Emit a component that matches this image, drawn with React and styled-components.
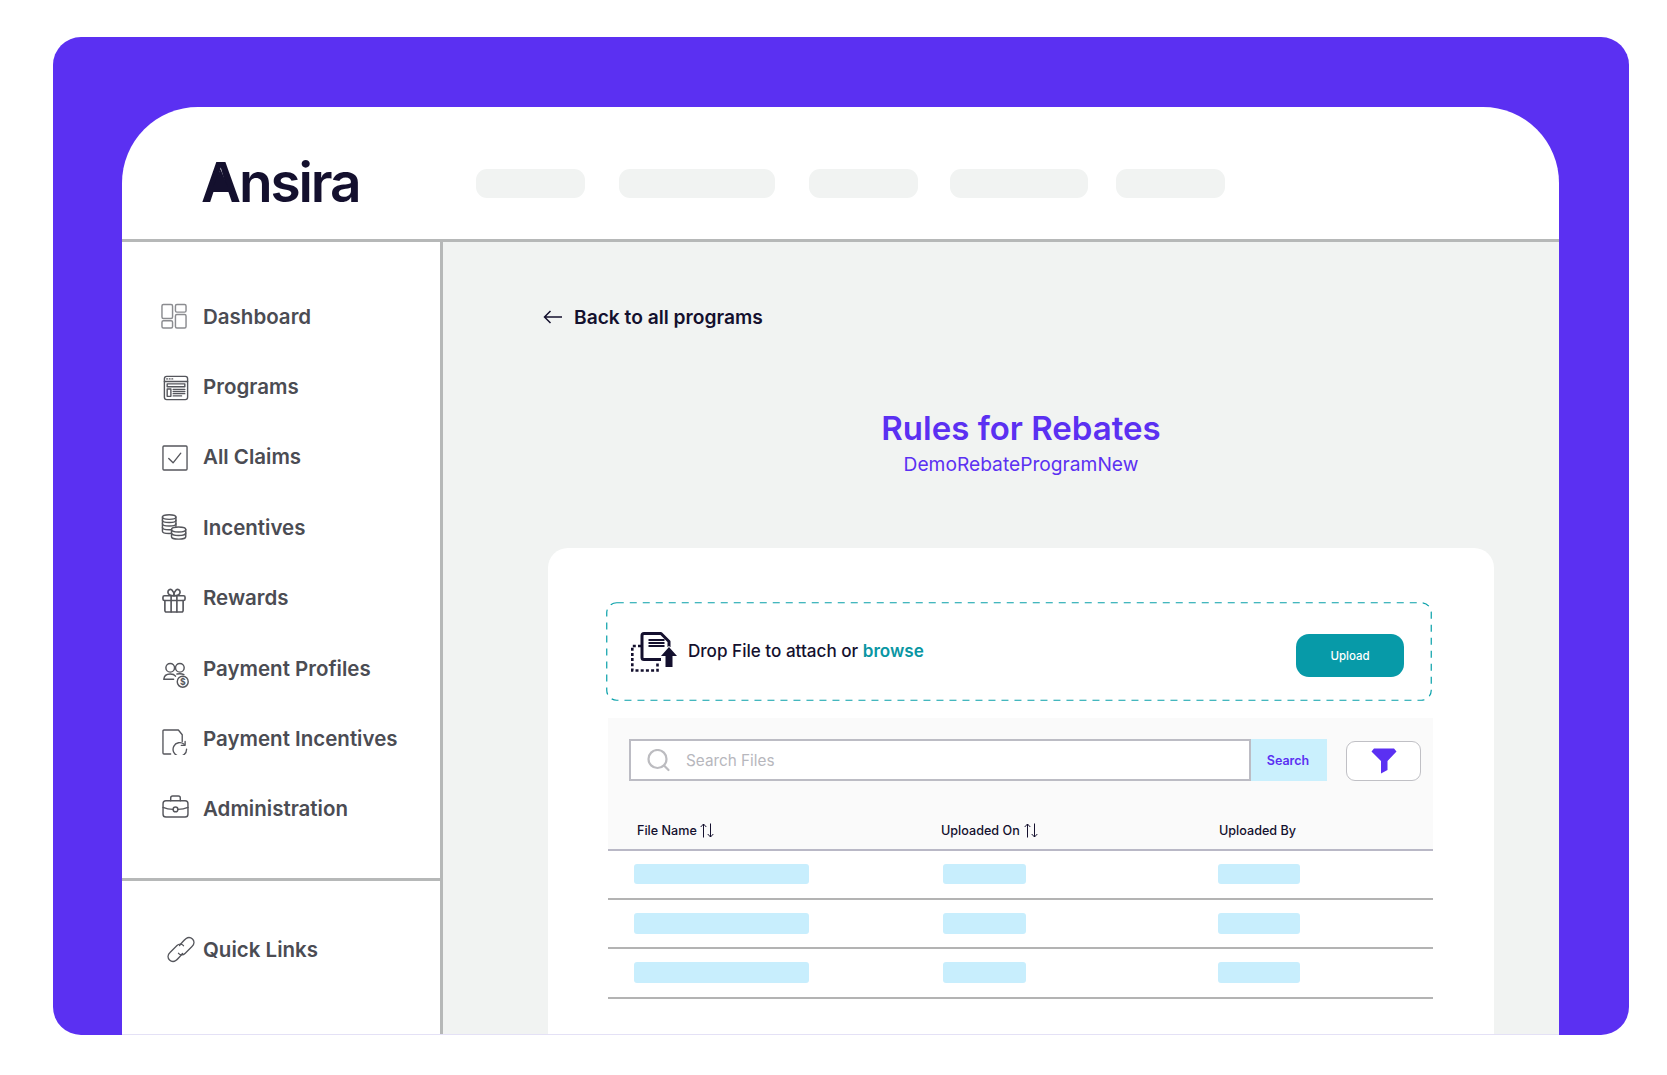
import styled, { createGlobalStyle } from "styled-components";

const GlobalStyle = createGlobalStyle`
    html, body {
        margin: 0;
        background: #ffffff;
        font-family: "Inter", "Liberation Sans", sans-serif;
    }
`;

const Frame = styled.div`
    width: 1576px;
    height: 998px;
    margin: 37px 0 0 53px;
    box-sizing: border-box;
    padding: 70px 70px 0 69px;
    background-color: #5b30f2;
    border-radius: 28px;
    display: flex;
`;
const Window = styled.div`
    flex: 1;
    display: flex;
    flex-direction: column;
    background-color: #ffffff;
    border-radius: 76px 76px 0 0;
    border-bottom: 1px solid #e4e1f6;
    overflow: hidden;
`;
const Header = styled.header`
    height: 135px;
    flex-shrink: 0;
    box-sizing: border-box;
    display: flex;
    align-items: flex-start;
    border-bottom: 3px solid #b6b8b8;
    padding: 45px 0 0 79px;
`;
const Logo = styled.div`
    width: 275px;
    flex-shrink: 0;
    font-size: 55px;
    line-height: 60px;
    font-weight: 600;
    letter-spacing: -2.1px;
    color: #14102e;
    position: relative;

    /* the logo's A has a solid middle with a notch at the foot */
    &::after {
        content: "";
        position: absolute;
        left: 12px;
        top: 17px;
        width: 15px;
        height: 18px;
        background-color: #14102e;
        clip-path: polygon(50% 0, 100% 100%, 0 100%);
    }
`;
const HeaderPills = styled.div`
    display: flex;
    margin-top: 17px;
`;
const Pill = styled.div`
    width: ${(props) => props.w + "px"};
    margin-right: ${(props) => props.gap + "px"};
    height: 29px;
    border-radius: 11px;
    background-color: #f1f3f2;
`;
const Body = styled.div`
    flex: 1;
    display: flex;
    min-height: 0;
`;
const Sidebar = styled.aside`
    width: 321px;
    flex-shrink: 0;
    box-sizing: border-box;
    border-right: 3px solid #b6b8b8;
    display: flex;
    flex-direction: column;
`;
const NavList = styled.nav`
    display: grid;
    grid-auto-rows: 70.4px;
    padding: 39px 0 33.5px 39px;
    border-bottom: 3px solid #b6b8b8;
`;
const NavRow = styled.div`
    display: flex;
    align-items: center;
    gap: 14px;
    font-size: 20.5px;
    font-weight: 600;
    color: #4b4c53;
`;
const IconSlot = styled.span`
    width: 28px;
    height: 28px;
    flex-shrink: 0;
    box-sizing: border-box;
    padding-left: ${(props) => (props.shift || 0) + "px"};
    display: flex;
    align-items: center;
    color: #55565c;

    svg {
        margin-top: ${(props) => (props.drop || 0) * 2 + "px"};
    }
`;
const QuickLinks = styled(NavRow)`
    padding: 55px 0 0 45px;
    gap: 8px;
`;
const Main = styled.main`
    flex: 1;
    display: flex;
    flex-direction: column;
    min-width: 0;
    background-color: #f1f3f2;
    padding: 60px 65px 0 105px;
`;
const BackLink = styled.div`
    display: flex;
    align-items: center;
    gap: 12px;
    height: 30px;
    margin-left: -5px;
    font-size: 19.2px;
    font-weight: 600;
    color: #14102e;
`;
const Title = styled.h1`
    margin: 76px 0 0;
    text-align: center;
    font-size: 33px;
    line-height: 40px;
    font-weight: 600;
    color: #5b30f2;
`;
const Subtitle = styled.div`
    margin-top: 4px;
    text-align: center;
    font-size: 19.2px;
    line-height: 24px;
    font-weight: 400;
    color: #5b30f2;
`;
const Card = styled.section`
    flex: 1;
    margin-top: 72px;
    background-color: #ffffff;
    border-radius: 20px 20px 0 0;
    box-sizing: border-box;
    padding: 54px 62px 0 58px;
`;
const DropZone = styled.div`
    height: 99px;
    box-sizing: border-box;
    position: relative;
    display: flex;
    align-items: center;
    padding: 0 28px 0 25px;
`;
const DashedEdge = styled.svg`
    position: absolute;
    inset: 0;
    width: 100%;
    height: 100%;
    fill: none;
    stroke: #07a0a9;
    stroke-width: 1.2;
    stroke-dasharray: 7 6;
`;
const DropText = styled.div`
    margin-left: 11px;
    font-size: 17.1px;
    font-weight: 500;
    color: #14102e;
    position: relative;
    top: -1px;
`;
const Browse = styled.span`
    font-weight: 600;
    color: #0a96a3;
`;
const UploadButton = styled.button`
    margin-left: auto;
    width: 108px;
    height: 43px;
    border: none;
    border-radius: 13px;
    background-color: #079aa8;
    color: #ffffff;
    font-family: inherit;
    font-size: 11.5px;
    font-weight: 500;
    position: relative;
    top: 4px;
`;
const Panel = styled.div`
    margin: 17px -1px 0 2px;
`;
const PanelTop = styled.div`
    background-color: #fafafa;
    padding: 21px 12px 0 21px;
`;
const Toolbar = styled.div`
    display: flex;
    align-items: flex-end;
`;
const SearchBox = styled.div`
    flex: 1;
    height: 42px;
    box-sizing: border-box;
    background-color: #ffffff;
    border: 2px solid #bcbcc4;
    display: flex;
    align-items: center;
    gap: 15px;
    padding-left: 16px;
    font-size: 15.3px;
    color: #b7b7bd;
`;
const SearchButton = styled.div`
    width: 76px;
    height: 42px;
    box-sizing: border-box;
    padding-right: 2px;
    display: flex;
    align-items: center;
    justify-content: center;
    background-color: #caf0fd;
    font-size: 12.5px;
    font-weight: 600;
    color: #5b30f2;
`;
const FilterButton = styled.div`
    width: 75px;
    height: 40px;
    margin-left: 19px;
    box-sizing: border-box;
    background-color: #ffffff;
    border: 1.5px solid #c0c0c5;
    border-radius: 9px;
    display: flex;
    align-items: center;
    justify-content: center;
`;
const HeadRow = styled.div`
    display: grid;
    grid-template-columns: 304px 278px 1fr;
    margin: 0 -12px 0 -21px;
    padding: 37px 0 7px 29px;
    border-bottom: 2px solid #b9b8c6;
`;
const HeadCell = styled.div`
    display: flex;
    align-items: center;
    gap: ${(props) => props.gap + "px"};
    height: 24px;
    font-size: 12.6px;
    font-weight: 500;
    color: #14102e;
`;
const Row = styled.div`
    display: grid;
    grid-template-columns: 309px 274.5px 1fr;
    align-items: center;
    height: 49.2px;
    box-sizing: border-box;
    padding: 0 0 1px 26px;
    border-bottom: 2px solid #b3b3b3;
`;
const Bar = styled.div`
    width: ${(props) => props.w + "px"};
    height: 20.5px;
    border-radius: 3px;
    background-color: #c8eefd;
`;

const stroke = {
    fill: "none",
    stroke: "currentColor",
    strokeWidth: 1.3,
    strokeLinecap: "round",
    strokeLinejoin: "round",
};

const DashboardIcon = () => (
    <svg width="26" height="26" viewBox="0 0 27 26" style={{ color: "#8b8c90" }} {...stroke} strokeWidth="1.5">
        <rect x="1" y="1" width="11" height="14.5" rx="1.5" />
        <rect x="15" y="1" width="11" height="8" rx="1.5" />
        <rect x="1" y="18" width="11" height="7.5" rx="1.5" />
        <rect x="15" y="11.5" width="11" height="14" rx="1.5" />
    </svg>
);
const ProgramsIcon = () => (
    <svg width="26" height="26" viewBox="0 0 28 27" {...stroke} strokeWidth="1.5">
        <rect x="1.5" y="1" width="25" height="25" rx="2.5" />
        <path d="M1.5 6.5h25" />
        <path d="M4 3.7h.8M6.8 3.7h.8M9.6 3.7h.8" />
        <rect x="4.5" y="9" width="19" height="3.2" />
        <rect x="4.5" y="14.5" width="4" height="8" />
        <path d="M11 15h12.5M11 17.3h12.5M11 19.6h12.5M11 22h9" />
    </svg>
);
const ClaimsIcon = () => (
    <svg width="26" height="26" viewBox="0 0 27 27" {...stroke} strokeWidth="1.4">
        <rect x="1" y="1" width="25" height="25" rx="1" />
        <path d="M7 14l4.5 4.5L19.5 8.5" />
    </svg>
);
const IncentivesIcon = () => (
    <svg width="26" height="26" viewBox="0 0 27 27" {...stroke} strokeWidth="1.5">
        <ellipse cx="8.5" cy="3.2" rx="7" ry="2.4" />
        <path d="M1.5 3.2v14.6c0 1.3 2.5 2.4 7 2.4 .7 0 1.2 0 1.8-.1" />
        <path d="M15.5 3.2v9.5" />
        <path d="M1.5 6.500c0 1.300 3 2.400 7 2.400s7-1.100 7-2.400" />
        <path d="M1.5 10c0 1.300 3 2.400 7 2.400s7-1.100 7-2.400" />
        <path d="M1.5 14c0 1.3 3 2.4 7 2.4 .7 0 1.300 0 2-.1" />
        <ellipse cx="18.3" cy="16" rx="7.4" ry="2.6" />
        <path d="M10.9 16v7.5c0 1.4 3.3 2.6 7.4 2.6s7.4-1.2 7.4-2.6V16" />
        <path d="M10.9 19.8c0 1.4 3.3 2.6 7.4 2.6s7.4-1.2 7.4-2.6" />
    </svg>
);
const RewardsIcon = () => (
    <svg width="24" height="25" viewBox="0 0 25 26" {...stroke} strokeWidth="1.7">
        <rect x="1" y="8" width="23" height="5" rx="1.5" />
        <path d="M3 13v10.5a1.5 1.5 0 0 0 1.5 1.5h16a1.500 1.500 0 0 0 1.500-1.500V13" />
        <path d="M9.5 8v17M15.5 8v17" />
        <path d="M12.5 8C10 8 6.500 7.500 6.200 4.500 6 2 8.500.6 10.200 2c1.500 1.200 2.300 3.500 2.300 6z" />
        <path d="M12.5 8c2.500 0 6-.5 6.300-3.500.2-2.500-2.300-3.900-4-2.500-1.500 1.200-2.300 3.500-2.300 6z" />
    </svg>
);
const ProfilesIcon = () => (
    <svg width="26" height="26" viewBox="0 0 27 27" {...stroke} strokeWidth="1.5">
        <circle cx="7.500" cy="6" r="4.500" />
        <circle cx="17.500" cy="6" r="4.500" />
        <path d="M1 18c0-3.800 2.800-5.500 6.500-5.500 2.800 0 4.500.8 5.500 2.200" />
        <path d="M1 18h10" />
        <path d="M14.500 12.500c1-.2 2-.3 3-.3 1.700 0 3 .3 4.200 1" />
        <circle cx="20.500" cy="20.500" r="5.700" />
        <text x="20.500" y="23.700" textAnchor="middle" fontSize="9" fontWeight="700" fill="currentColor" stroke="none" fontFamily="Inter, sans-serif">$</text>
    </svg>
);
const PaymentIncentivesIcon = () => (
    <svg width="26" height="26" viewBox="0 0 27 27" {...stroke} strokeWidth="1.4">
        <path d="M9 26H2a1 1 0 0 1-1-1V2a1 1 0 0 1 1-1h15l4 5v7" />
        <path d="M25.500 21a7 7 0 1 1-2.500-5.200" />
        <path d="M24 13v4h-4" />
    </svg>
);
const AdminIcon = () => (
    <svg width="27" height="23" viewBox="0 0 28 24" {...stroke} strokeWidth="1.5">
        <rect x="1" y="6" width="26" height="17" rx="3" />
        <path d="M9 6V3a2 2 0 0 1 2-2h6a2 2 0 0 1 2 2v3" />
        <path d="M1 13c3 1.300 7 2 10.500 2M16.500 15c3.500 0 7.500-.7 10.500-2" />
        <circle cx="14" cy="15" r="2.500" />
    </svg>
);
const LinkIcon = () => (
    <svg width="28" height="27" viewBox="0 0 28 27" {...stroke}>
        <path d="M12.500 9.500l3-3.500c2-2.400 3.800-4.500 6.500-4.500 2.600 0 5 2.400 5 5 0 1.600-.8 2.900-2 4l-7 7c-1.800 1.800-4.800 1.800-6.500-.2" />
        <path d="M15.500 17.500l-3 3.500c-2 2.400-3.800 4.500-6.500 4.500-2.600 0-5-2.400-5-5 0-1.600.8-2.900 2-4l7-7c1.800-1.800 4.800-1.800 6.500.2" />
    </svg>
);
const BackArrow = () => (
    <svg width="19" height="14" viewBox="0 0 19 14" fill="none" stroke="#14102e" strokeWidth="1.5">
        <path d="M19 7H1.500M7.500 1L1.500 7l6 6" />
    </svg>
);
const UploadFileIcon = () => (
    <svg width="46" height="40" viewBox="0 0 46 40" fill="none" stroke="#14102e" style={{ flexShrink: 0 }}>
        <path d="M10 14H1.300V38.500H26.500V30" strokeWidth="2.600" strokeDasharray="3 2.200" />
        <path d="M30 27.500H13a2 2 0 0 1-2-2V3.500a2 2 0 0 1 2-2h17l8 8V15" strokeWidth="3" strokeLinejoin="round" />
        <path d="M17.500 8h16M17.500 11h16M17.500 14h16" strokeWidth="1.800" />
        <path d="M38 15l8 9h-4.500v11h-7V24H30z" fill="#14102e" stroke="#ffffff" strokeWidth="1.500" paintOrder="stroke" />
    </svg>
);
const SearchIcon = () => (
    <svg width="24" height="23" viewBox="0 0 24 23" fill="none" stroke="#bcbcc0" strokeWidth="2.200" strokeLinecap="round">
        <circle cx="10.500" cy="10" r="9" />
        <path d="M17.500 17l4 4" />
    </svg>
);
const FunnelIcon = () => (
    <svg width="26" height="26" viewBox="0 0 26 26" fill="#5b30f2">
        <path d="M3 .5h20l2.500 3L16.500 13v9L10 25.500V13L.5 3.500z" />
    </svg>
);
const SortIcon = () => (
    <svg width="14" height="15" viewBox="0 0 14 15" fill="none" stroke="#14102e" strokeWidth="1">
        <path d="M3.500 14.500V1M.7 4l2.800-3 2.800 3" />
        <path d="M10.500.5V14M7.700 11l2.800 3 2.800-3" />
    </svg>
);

const navItems = [
    { label: "Dashboard", Icon: DashboardIcon, shift: 0, drop: 0 },
    { label: "Programs", Icon: ProgramsIcon, shift: 2, drop: 1 },
    { label: "All Claims", Icon: ClaimsIcon, shift: 1, drop: 1 },
    { label: "Incentives", Icon: IncentivesIcon, shift: 0, drop: 0 },
    { label: "Rewards", Icon: RewardsIcon, shift: 1, drop: 3 },
    { label: "Payment Profiles", Icon: ProfilesIcon, shift: 2, drop: 7 },
    { label: "Payment Incentives", Icon: PaymentIncentivesIcon, shift: 1, drop: 3 },
    { label: "Administration", Icon: AdminIcon, shift: 1, drop: -2 },
];

const pills = [
    { w: 109, gap: 34 },
    { w: 156, gap: 34 },
    { w: 109, gap: 32 },
    { w: 138, gap: 28 },
    { w: 109, gap: 0 },
];

export default function App() {
    return (
        <>
            <GlobalStyle />
            <Frame>
                <Window>
                    <Header>
                        <Logo>Ansira</Logo>
                        <HeaderPills>
                            {pills.map((pill, i) => (
                                <Pill key={i} w={pill.w} gap={pill.gap} />
                            ))}
                        </HeaderPills>
                    </Header>
                    <Body>
                        <Sidebar>
                            <NavList>
                                {navItems.map(({ label, Icon, shift, drop }) => (
                                    <NavRow key={label}>
                                        <IconSlot shift={shift} drop={drop}>
                                            <Icon />
                                        </IconSlot>
                                        {label}
                                    </NavRow>
                                ))}
                            </NavList>
                            <QuickLinks>
                                <IconSlot>
                                    <LinkIcon />
                                </IconSlot>
                                Quick Links
                            </QuickLinks>
                        </Sidebar>
                        <Main>
                            <BackLink>
                                <BackArrow />
                                Back to all programs
                            </BackLink>
                            <Title>Rules for Rebates</Title>
                            <Subtitle>DemoRebateProgramNew</Subtitle>
                            <Card>
                                <DropZone>
                                    <DashedEdge>
                                        <rect x="0.75" y="0.75" width="824.5" height="97.5" rx="10" />
                                    </DashedEdge>
                                    <UploadFileIcon />
                                    <DropText>
                                        Drop File to attach or <Browse>browse</Browse>
                                    </DropText>
                                    <UploadButton>Upload</UploadButton>
                                </DropZone>
                                <Panel>
                                    <PanelTop>
                                        <Toolbar>
                                            <SearchBox>
                                                <SearchIcon />
                                                Search Files
                                            </SearchBox>
                                            <SearchButton>Search</SearchButton>
                                            <FilterButton>
                                                <FunnelIcon />
                                            </FilterButton>
                                        </Toolbar>
                                        <HeadRow>
                                            <HeadCell gap={3}>
                                                File Name <SortIcon />
                                            </HeadCell>
                                            <HeadCell gap={4}>
                                                Uploaded On <SortIcon />
                                            </HeadCell>
                                            <HeadCell>Uploaded By</HeadCell>
                                        </HeadRow>
                                    </PanelTop>
                                    {[0, 1, 2].map((row) => (
                                        <Row key={row}>
                                            <Bar w={175} />
                                            <Bar w={83} />
                                            <Bar w={82} />
                                        </Row>
                                    ))}
                                </Panel>
                            </Card>
                        </Main>
                    </Body>
                </Window>
            </Frame>
        </>
    );
}
